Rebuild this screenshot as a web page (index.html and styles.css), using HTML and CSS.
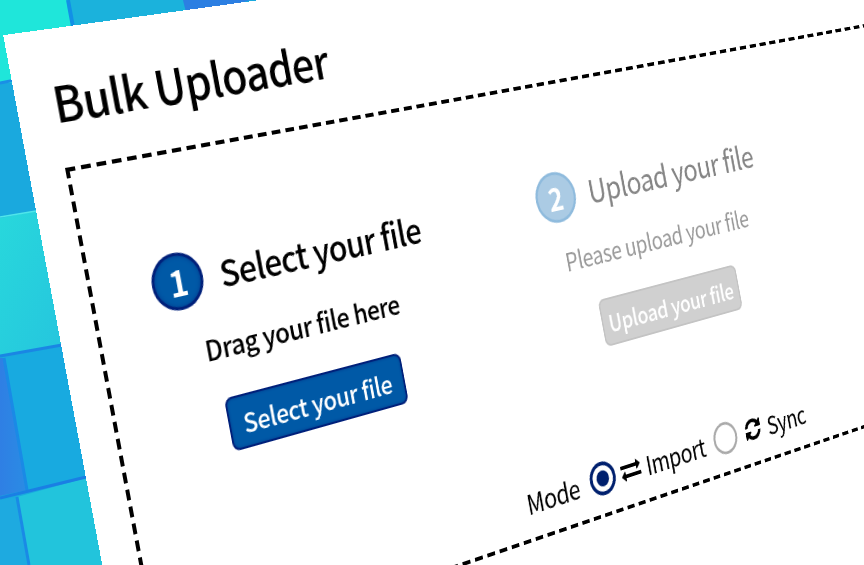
FILE: index.html
```html
<!DOCTYPE html>
<html lang="en">
<head>
   <meta charset="UTF-8">
   <meta name="viewport" content="width=device-width, initial-scale=1.0">
   <title>Bulk Uploader</title>
   <link rel="stylesheet" href="styles.css">
</head>
<body>
   <svg class="backdrop" viewBox="0 0 864 565" aria-hidden="true">
      <defs>
         <linearGradient id="tileBlue" x1="0" y1="0" x2="1" y2="0">
            <stop offset="0" stop-color="#2f7fe4"/>
            <stop offset="1" stop-color="#2a8ce4"/>
         </linearGradient>
         <linearGradient id="tileCyan" x1="0" y1="0" x2="1" y2="1">
            <stop offset="0" stop-color="#28d8dc"/>
            <stop offset="1" stop-color="#25c4de"/>
         </linearGradient>
      </defs>
      <rect width="864" height="565" fill="#1aa9de"/>
      <polygon points="0,0 68,0 74,30 14,83 0,83" fill="#1fe6da"/>
      <polygon points="68,0 183,0 188,20 73,28" fill="#1bb2dc"/>
      <polygon points="183,0 250,0 188,20" fill="#2c7fe2"/>
      <line x1="68" y1="0" x2="73" y2="27" stroke="#1290e6" stroke-width="4"/>
      <line x1="0" y1="83" x2="20" y2="79" stroke="#1a8fe6" stroke-width="3"/>
      <polygon points="0,218 36,211 70,345 0,356" fill="url(#tileCyan)"/>
      <line x1="0" y1="217" x2="36" y2="211" stroke="#4fe6ea" stroke-width="1.5"/>
      <polygon points="0,358 4,358 27,490 0,496" fill="url(#tileBlue)"/>
      <polygon points="4,358 62,346 86,477 27,490" fill="#18aae0"/>
      <line x1="0" y1="356" x2="62" y2="345" stroke="#1a86e4" stroke-width="3"/>
      <line x1="4" y1="358" x2="27" y2="490" stroke="#1a8ae6" stroke-width="3"/>
      <polygon points="0,500 16,497 29,565 0,565" fill="#1eaae0"/>
      <polygon points="17,497 86,478 110,565 29,565" fill="#22c4dc"/>
      <line x1="0" y1="498" x2="86" y2="477" stroke="#1a7fe4" stroke-width="3"/>
      <line x1="17" y1="497" x2="29" y2="565" stroke="#1a8ae6" stroke-width="3"/>
   </svg>

   <main class="card">
      <h1 class="card-title">Bulk Uploader</h1>
      <section class="drop-zone">
         <div class="steps">
            <div class="step">
               <div class="step-head">
                  <span class="step-num">1</span>
                  <h2>Select your file</h2>
               </div>
               <p>Drag your file here</p>
               <button type="button" class="step-button">Select your file</button>
            </div>
            <div class="step step-disabled">
               <div class="step-head">
                  <span class="step-num">2</span>
                  <h2>Upload your file</h2>
               </div>
               <p>Please upload your file</p>
               <button type="button" class="step-button">Upload your file</button>
            </div>
         </div>
         <div class="mode-row">
            <span class="mode-label">Mode</span>
            <span class="radio radio-on"></span>
            <svg class="mode-icon" viewBox="0 0 1792 1792" aria-hidden="true"><path d="M1792 1184v192q0 13-9.5 22.5t-22.5 9.5h-1376v192q0 13-9.5 22.5t-22.5 9.5q-12 0-24-10l-319-320q-9-9-9-22 0-14 9-23l320-320q9-9 23-9 13 0 22.5 9.5t9.5 22.5v192h1376q13 0 22.5 9.5t9.5 22.5zm0-544q0 14-9 23l-320 320q-9 9-23 9-13 0-22.5-9.5t-9.5-22.5v-192h-1376q-13 0-22.5-9.5t-9.5-22.5v-192q0-13 9.5-22.5t22.5-9.5h1376v-192q0-14 9-23t23-9q12 0 24 10l319 319q9 9 9 23z"/></svg>
            <span class="mode-text">Import</span>
            <span class="radio"></span>
            <svg class="mode-icon sync-icon" viewBox="0 0 1792 1792" aria-hidden="true"><path d="M1639 1056q0 5-1 7-64 268-268 434.5t-478 166.5q-146 0-282.5-55t-243.5-157l-129 129q-19 19-45 19t-45-19-19-45v-448q0-26 19-45t45-19h448q26 0 45 19t19 45-19 45l-137 137q71 66 161 102t187 36q134 0 250-65t186-179q11-17 53-117 8-23 30-23h192q13 0 22.5 9.5t9.5 22.5zm25-800v448q0 26-19 45t-45 19h-448q-26 0-45-19t-19-45 19-45l138-138q-148-137-349-137-134 0-250 65t-186 179q-11 17-53 117-8 23-30 23h-199q-13 0-22.5-9.5t-9.5-22.5v-7q65-268 270-434.5t480-166.5q146 0 284 55.5t245 156.5l130-129q19-19 45-19t45 19 19 45z"/></svg>
            <span class="mode-text">Sync</span>
         </div>
      </section>
   </main>
</body>
</html>
```

FILE: styles.css
```css
html, body {
   margin: 0;
   height: 100%;
   overflow: hidden;
   background-color: #1aa9de;
}

body {
   font-family: "Noto Sans CJK JP", "Lato", sans-serif;
   color: #000;
}

.backdrop {
   position: absolute;
   top: 0;
   left: 0;
   width: 864px;
   height: 565px;
   filter: blur(0.7px);
}

/* the whole card is a photo on a slant, so one perspective matrix */
.card {
   position: absolute;
   top: 0;
   left: 0;
   box-sizing: border-box;
   width: 1500px;
   height: 900px;
   padding: 40px 0 0 36px;
   background-color: #fff;
   transform-origin: 0 0;
   transform: matrix3d(1.0026, -0.1266, 0, 0.0003, 0.1982, 1.06, 0, 0, 0, 0, 1, 0, 3.14, 34.76, 0, 0.9892);
}

.card-title {
   margin: 0 0 34px;
   font-size: 46px;
   line-height: 56px;
   font-weight: 500;
   letter-spacing: -0.8px;
}

/* gradients and not a dashed border: the dash here is longer than the browser's */
.drop-zone {
   box-sizing: border-box;
   width: 1300px;
   height: 474px;
   padding: 98px 0 0 4px;
   background:
      repeating-linear-gradient(90deg, #000 0 10px, transparent 10px 16px) top left / 100% 4px no-repeat,
      repeating-linear-gradient(90deg, #000 0 10px, transparent 10px 16px) bottom left / 100% 4px no-repeat,
      repeating-linear-gradient(180deg, #000 0 10px, transparent 10px 16px) top left / 4px 100% no-repeat;
}

.steps {
   display: grid;
   grid-template-columns: 434px 434px;
   column-gap: 36px;
}

.step {
   display: flex;
   flex-direction: column;
   align-items: center;
}

.step-head {
   display: flex;
   align-items: center;
   gap: 18px;
}

.step-head h2 {
   margin: 0;
   font-size: 35.5px;
   line-height: 55px;
   font-weight: 500;
   letter-spacing: -0.8px;
}

.step-num {
   box-sizing: border-box;
   display: flex;
   justify-content: center;
   align-items: center;
   width: 55px;
   height: 55px;
   border: 3px solid #00207a;
   border-radius: 50%;
   background-color: #0059a6;
   box-shadow: inset 0 0 4px #003a8c;
   color: #fff;
   font-size: 34px;
   font-weight: 700;
}

.step p {
   margin: 23px 0 29px;
   font-size: 27px;
   line-height: 40px;
   font-weight: 500;
   letter-spacing: -0.5px;
}

.step-button {
   width: 206px;
   height: 52px;
   padding: 0;
   border: 2px solid #00207a;
   border-radius: 8px;
   background-color: #0059a6;
   box-shadow: inset 0 0 3px #003a8c;
   color: #fff;
   font-family: inherit;
   font-size: 25.5px;
   font-weight: 500;
   letter-spacing: -0.4px;
   white-space: nowrap;
}

.step-disabled h2 {
   color: #858585;
   font-weight: 400;
}

.step-disabled p {
   color: #9a9a9a;
   font-weight: 400;
}

.step-disabled .step-num {
   border-color: #8fbbdd;
   background-color: #abcbe4;
   box-shadow: none;
}

.step-disabled .step-button {
   border-color: #c4c4c4;
   background-color: #d0d0d0;
   box-shadow: none;
}

.mode-row {
   display: flex;
   align-items: center;
   height: 36px;
   margin-top: 118px;
   padding-left: 441px;
   font-size: 28.5px;
   letter-spacing: -0.5px;
}

.mode-label {
   margin-right: 15px;
}

.mode-text {
   margin-left: 8px;
}

.mode-icon {
   width: 28px;
   height: 28px;
   margin-left: 8px;
}

.sync-icon {
   margin-left: 11px;
}

.mode-text + .radio {
   margin-left: 14px;
}

.radio {
   box-sizing: border-box;
   width: 36px;
   height: 36px;
   border: 3px solid #aaa;
   border-radius: 50%;
   background-color: #fff;
}

.radio-on {
   border: 4px solid #00206e;
   background: radial-gradient(circle, #00206e 0 8px, #fff 9px);
}
```
